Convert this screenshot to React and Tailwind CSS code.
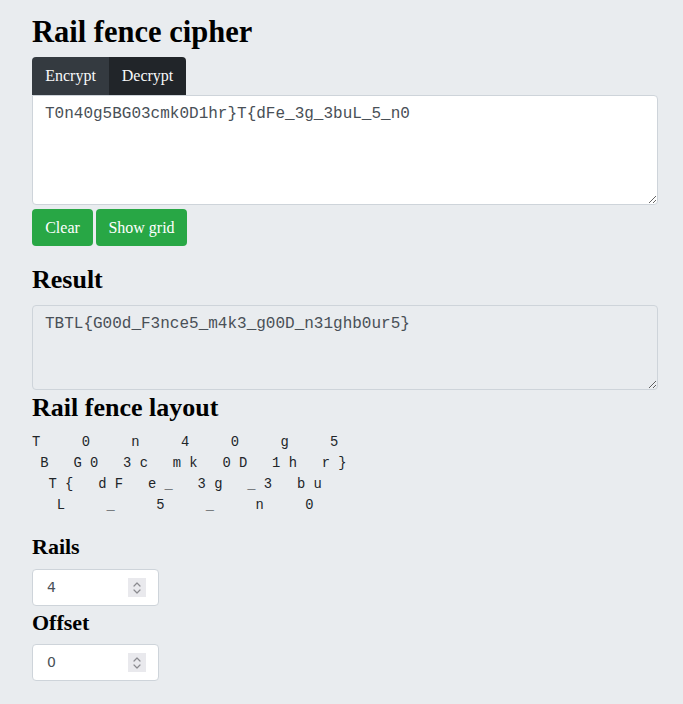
import React from "react";

const PLAIN = "TBTL{G00d_F3nce5_m4k3_g00D_n31ghb0ur5}";
const RAILS = 4;

function buildRows(text, rails) {
  const rows = Array.from({ length: rails }, () => Array(text.length).fill(" "));
  const period = 2 * (rails - 1);
  for (let i = 0; i < text.length; i++) {
    const m = i % period;
    const r = m < rails ? m : period - m;
    rows[r][i] = text[i];
  }
  return rows.map((r) => r.join("").replace(/\s+$/, ""));
}

function Spinner() {
  return (
    <span className="flex h-[19px] w-[18px] flex-col items-center justify-center bg-[#e9e9ed]">
      <svg width="10" height="14" viewBox="0 0 10 14" fill="none" stroke="#8a8a8f" strokeWidth="1.2" strokeLinecap="round" strokeLinejoin="round">
        <path d="M2 5 L5 2 L8 5" />
        <path d="M2 9 L5 12 L8 9" />
      </svg>
    </span>
  );
}

function NumberBox({ value }) {
  return (
    <div className="flex h-[37px] w-[127px] items-center justify-between rounded-[4px] border border-[#ced4da] bg-white pl-[14px] pr-[12px]">
      <span className="text-[14px] text-[#495057] [font-family:'DejaVu_Sans',sans-serif]">{value}</span>
      <Spinner />
    </div>
  );
}

export default function App() {
  const rows = buildRows(PLAIN, RAILS);
  return (
    <div className="min-h-[704px] w-full bg-[#e9ecef] pl-[32px] pr-[25px] text-[#000]">
      <div className="flex flex-col [font-family:'Liberation_Serif',serif]">
        <h1 className="mt-[12px] mb-[5px] text-[30.5px] font-bold leading-[40px] [font-family:'Liberation_Serif',serif]">Rail fence cipher</h1>
        <div className="flex">
          <button className="h-[38px] w-[77px] rounded-tl-[4px] bg-[#343a40] text-[16px] text-[#f8f9fa] [font-family:'Liberation_Serif',serif]">Encrypt</button>
          <button className="h-[38px] w-[77px] rounded-tr-[4px] bg-[#212529] text-[16px] text-[#f8f9fa] [font-family:'Liberation_Serif',serif]">Decrypt</button>
        </div>
        <textarea
          defaultValue="T0n40g5BG03cmk0D1hr}T{dFe_3g_3buL_5_n0"
          className="block h-[110px] w-full rounded-tr-[4px] rounded-b-[4px] border border-[#ced4da] bg-white px-[12px] py-[6px] text-[16px] leading-[24px] text-[#495057] outline-none [font-family:'Liberation_Mono',monospace]"
        />
        <div className="mt-[4px] flex gap-[3px]">
          <button className="h-[37px] w-[61px] rounded-[4px] bg-[#28a745] text-[16px] text-white [font-family:'Liberation_Serif',serif]">Clear</button>
          <button className="h-[37px] w-[91px] rounded-[4px] bg-[#28a745] text-[16px] text-white [font-family:'Liberation_Serif',serif]">Show grid</button>
        </div>
        <h2 className="mt-[18px] mb-[9px] text-[26px] font-bold leading-[32px] [font-family:'Liberation_Serif',serif]">Result</h2>
        <textarea
          readOnly
          defaultValue={PLAIN}
          className="block h-[85px] w-full rounded-[4px] border border-[#ced4da] bg-[#e9ecef] px-[12px] py-[6px] text-[16px] leading-[24px] text-[#495057] outline-none [font-family:'Liberation_Mono',monospace]"
        />
        <h2 className="mt-[2px] text-[26px] font-bold leading-[32px] [font-family:'Liberation_Serif',serif]">Rail fence layout</h2>
        <pre className="mt-[8px] text-[13.8px] leading-[21px] text-[#212529] [font-family:'Liberation_Mono',monospace]">
          {rows.join("\n")}
        </pre>
        <h3 className="mt-[17px] mb-[8px] text-[22px] font-bold leading-[28px] [font-family:'Liberation_Serif',serif]">Rails</h3>
        <NumberBox value="4" />
        <h3 className="mt-[3px] mb-[7px] text-[22px] font-bold leading-[28px] [font-family:'Liberation_Serif',serif]">Offset</h3>
        <NumberBox value="0" />
      </div>
    </div>
  );
}
